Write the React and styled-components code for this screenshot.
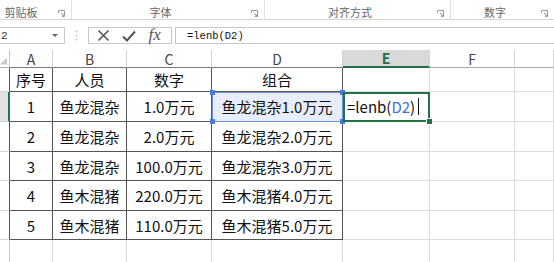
import styled, { createGlobalStyle } from 'styled-components'

const GlobalStyle = createGlobalStyle`
  html, body {
    margin: 0;
    background: #fff;
  }
  body {
    font-family: "Noto Sans CJK SC", "Noto Sans", sans-serif;
    overflow: hidden;
  }
`

const Page = styled.div`
  width: 554px;
  height: 262px;
  overflow: hidden;
  display: flex;
  flex-direction: column;
`

const Ribbon = styled.div`
  display: flex;
  height: 23px;
  box-sizing: border-box;
  border-bottom: 1px solid #d5d5d5;
`
const Group = styled.div`
  display: flex;
  align-items: center;
  width: ${p => p.$width}px;
  flex-shrink: 0;
  box-sizing: border-box;
  padding-top: 5px;
  border-right: ${p => (p.$last ? 'none' : '1px solid #e1e1e1')};
`
const GroupLabel = styled.div`
  flex: 1;
  text-align: center;
  padding-right: ${p => p.$pad || 0}px;
  font-size: 11px;
  color: #666;
  line-height: 14px;
`
const Launcher = styled.svg`
  width: 7px;
  height: 7px;
  margin: 3px 6px 0 2px;
  flex-shrink: 0;
`

const FormulaBar = styled.div`
  display: flex;
  height: 19px;
  margin-top: 7px;
`
const NameBox = styled.div`
  width: 65px;
  box-sizing: border-box;
  border: 1px solid #c6c6c6;
  border-left: none;
  display: flex;
  align-items: center;
  overflow: hidden;
  color: #333;
`
const NameText = styled.span`
  flex: 1;
  padding-left: 1px;
  font-family: "Liberation Mono", monospace;
  font-size: 11px;
`
const DropArrow = styled.span`
  width: 0;
  height: 0;
  margin-right: 6px;
  border-left: 3px solid transparent;
  border-right: 3px solid transparent;
  border-top: 3px solid #666;
`
const Grip = styled.div`
  width: 23px;
  display: flex;
  align-items: center;
  justify-content: center;
`
const FxButtons = styled.div`
  width: 84px;
  box-sizing: border-box;
  border: 1px solid #c6c6c6;
  display: flex;
  align-items: center;
  justify-content: space-around;
  padding: 0 4px 0 2px;
`
const FxText = styled.span`
  font-family: "Liberation Serif", serif;
  font-style: italic;
  font-size: 17px;
  line-height: 17px;
  color: #555;
  margin-top: -2px;
`
const FormulaInput = styled.div`
  flex: 1;
  margin-left: 3px;
  box-sizing: border-box;
  border: 1px solid #c6c6c6;
  border-right: none;
  padding-left: 11px;
  display: flex;
  align-items: center;
  font-family: "Liberation Mono", monospace;
  font-size: 10.5px;
  color: #111;
`

const Grid = styled.div`
  margin-top: 6px;
  display: grid;
  grid-template-columns: 10px 43px 74px 85px 131px 87px 85px 1fr;
  grid-template-rows: 18px 24px 30px 30px 29px 30px 29px 30px;
`

const Corner = styled.div`
  box-sizing: border-box;
  border-right: 1px solid #c6c6c6;
  border-bottom: 1px solid #ababab;
  display: flex;
  align-items: flex-end;
  justify-content: flex-end;
  padding: 0 2px 2px 0;
`
const ColHead = styled.div`
  box-sizing: border-box;
  border-right: 1px solid #d4d4d4;
  border-bottom: ${p => (p.$active ? '2px solid #217346' : `1px solid ${p.$table ? '#7a7a7a' : '#ababab'}`)};
  background: ${p => (p.$active ? '#d9d9d9' : '#fff')};
  color: ${p => (p.$active ? '#217346' : '#444')};
  font-weight: ${p => (p.$active ? 700 : 400)};
  font-size: 14px;
  display: flex;
  align-items: center;
  justify-content: center;
  line-height: 1;
`
const RowHead = styled.div`
  box-sizing: border-box;
  border-bottom: 1px solid #d4d4d4;
  border-right: ${p => (p.$active ? '2px solid #217346' : `1px solid ${p.$table ? '#555' : '#c6c6c6'}`)};
  background: ${p => (p.$active ? '#e1e1e1' : '#fff')};
`
const Cell = styled.div`
  position: relative;
  box-sizing: border-box;
  border-right: 1px solid ${p => (p.$table ? '#555' : '#dadcdd')};
  border-bottom: 1px solid ${p => (p.$table ? '#555' : '#dadcdd')};
  background: ${p => (p.$ref ? '#e8eef9' : '#fff')};
  outline: ${p => (p.$active ? '2px solid #217346' : p.$ref ? '1px solid #6f93dc' : 'none')};
  outline-offset: ${p => (p.$active ? '-2px' : '-1px')};
  z-index: ${p => (p.$active || p.$ref ? 1 : 0)};
  display: flex;
  align-items: center;
  justify-content: ${p => (p.$left ? 'flex-start' : 'center')};
  padding-left: ${p => (p.$left ? '4px' : '0')};
  font-size: 15px;
  color: #111;
  white-space: nowrap;
`
const RefName = styled.span`
  color: #3d74d9;
`
const Caret = styled.span`
  display: inline-block;
  width: 1px;
  height: 17px;
  margin-left: 3px;
  background: #111;
`
const Handle = styled.span`
  position: absolute;
  width: 5px;
  height: 5px;
  background: ${p => p.$color};
  ${p => (p.$top ? 'top: -2px;' : 'bottom: -3px;')}
  ${p => (p.$leftSide ? 'left: -2px;' : 'right: -3px;')}
  ${p => (p.$ring ? 'box-shadow: 0 0 0 1px #fff;' : '')}
`

// G's letter sits past the right edge of the shot, so its header stays blank
const cols = ['A', 'B', 'C', 'D', 'E', 'F', '']
const rows = [
  ['序号', '人员', '数字', '组合'],
  ['1', '鱼龙混杂', '1.0万元', '鱼龙混杂1.0万元'],
  ['2', '鱼龙混杂', '2.0万元', '鱼龙混杂2.0万元'],
  ['3', '鱼龙混杂', '100.0万元', '鱼龙混杂3.0万元'],
  ['4', '鱼木混猪', '220.0万元', '鱼木混猪4.0万元'],
  ['5', '鱼木混猪', '110.0万元', '鱼木混猪5.0万元'],
  [],
]

const LauncherIcon = () => (
  <Launcher viewBox="0 0 7 7">
    <path d="M0.5 3V0.5H6.5V6.5H4" fill="none" stroke="#9a9a9a" strokeWidth="1" />
    <path d="M3 3L6 6M6 4V6H4" fill="none" stroke="#9a9a9a" strokeWidth="1" />
  </Launcher>
)

const App = () => (
  <Page>
    <GlobalStyle />
    <Ribbon>
      <Group $width={72}>
        <GroupLabel $pad={14}>剪贴板</GroupLabel>
        <LauncherIcon />
      </Group>
      <Group $width={193}>
        <GroupLabel>字体</GroupLabel>
        <LauncherIcon />
      </Group>
      <Group $width={186}>
        <GroupLabel>对齐方式</GroupLabel>
        <LauncherIcon />
      </Group>
      <Group $width={103} $last>
        <GroupLabel>数字</GroupLabel>
        <LauncherIcon />
      </Group>
    </Ribbon>

    <FormulaBar>
      <NameBox>
        <NameText>2</NameText>
        <DropArrow />
      </NameBox>
      <Grip>
        <svg width="3" height="11" viewBox="0 0 3 11">
          <circle cx="1.5" cy="1.5" r="1" fill="#c8c8c8" />
          <circle cx="1.5" cy="5.5" r="1" fill="#c8c8c8" />
          <circle cx="1.5" cy="9.5" r="1" fill="#c8c8c8" />
        </svg>
      </Grip>
      <FxButtons>
        <svg width="13" height="13" viewBox="0 0 13 13">
          <path d="M1.5 1.5L11.5 11.5M11.5 1.5L1.5 11.5" stroke="#555" strokeWidth="1.6" />
        </svg>
        <svg width="14" height="12" viewBox="0 0 14 12">
          <path d="M1 6.5L5 10.5L13 1.5" fill="none" stroke="#555" strokeWidth="2" />
        </svg>
        <FxText>fx</FxText>
      </FxButtons>
      <FormulaInput>=lenb(D2)</FormulaInput>
    </FormulaBar>

    <Grid>
      <Corner>
        <svg width="8" height="8" viewBox="0 0 8 8">
          <polygon points="8,0 8,8 0,8" fill="#c9c9c9" />
        </svg>
      </Corner>
      {cols.map((c, i) => (
        <ColHead key={i} $active={c === 'E'} $table={i < 4}>{c}</ColHead>
      ))}
      {rows.map((r, ri) => (
        <Row key={ri} index={ri} values={r} />
      ))}
    </Grid>
  </Page>
)

const Row = ({ index, values }) => {
  const inTable = values.length > 0
  const activeRow = index === 1
  return (
    <>
      <RowHead $active={activeRow} $table={inTable} />
      {cols.map((c, ci) => {
        const table = inTable && ci < 4
        if (activeRow && c === 'D') {
          return (
            <Cell key={ci} $table $ref>
              {values[ci]}
              <Handle $color="#4a7bd6" $top $leftSide />
              <Handle $color="#4a7bd6" $top />
              <Handle $color="#4a7bd6" $leftSide />
              <Handle $color="#4a7bd6" />
            </Cell>
          )
        }
        if (activeRow && c === 'E') {
          return (
            <Cell key={ci} $active $left>
              =lenb(<RefName>D2</RefName>)<Caret />
              <Handle $color="#217346" $ring />
            </Cell>
          )
        }
        return (
          <Cell key={ci} $table={table}>
            {table ? values[ci] : null}
          </Cell>
        )
      })}
    </>
  )
}

export default App
